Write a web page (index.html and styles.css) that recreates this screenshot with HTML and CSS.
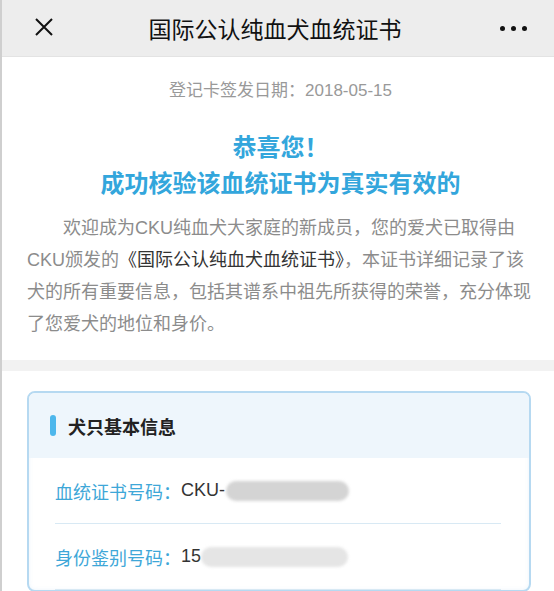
FILE: index.html
```html
<!DOCTYPE html>
<html lang="zh-CN">
<head>
<meta charset="utf-8">
<title>国际公认纯血犬血统证书</title>
<link rel="stylesheet" href="styles.css">
</head>
<body>
<div class="page">
  <header class="nav">
    <span class="nav-close">
      <svg width="20" height="20" viewBox="0 0 20 20"><path d="M2 2 L18 18 M18 2 L2 18" stroke="#111" stroke-width="2" fill="none"/></svg>
    </span>
    <h1 class="nav-title">国际公认纯血犬血统证书</h1>
    <span class="nav-more"><i></i><i></i><i></i></span>
  </header>

  <section class="intro">
    <p class="date">登记卡签发日期：2018-05-15</p>
    <h2 class="congrats">恭喜您！<br>成功核验该血统证书为真实有效的</h2>
    <p class="desc">欢迎成为CKU纯血犬大家庭的新成员，您的爱犬已取得由<br>CKU颁发的<span class="desc-strong">《国际公认纯血犬血统证书》</span>，本证书详细记录了该<br>犬的所有重要信息，包括其谱系中祖先所获得的荣誉，充分体现<br>了您爱犬的地位和身价。</p>
  </section>

  <div class="gap"></div>

  <section class="info">
    <div class="card">
      <div class="card-head"><span class="card-bar"></span>犬只基本信息</div>
      <div class="card-body">
        <div class="row"><span class="label">血统证书号码：</span><span class="value">CKU-</span><span class="mask mask-dark"></span></div>
        <div class="row"><span class="label">身份鉴别号码：</span><span class="value">15</span><span class="mask mask-light"></span></div>
      </div>
    </div>
  </section>
</div>
</body>
</html>
```

FILE: styles.css
```css
* { box-sizing: border-box; margin: 0; padding: 0; }
html, body { background: #fff; }
body {
  font-family: "Liberation Sans", "Noto Sans CJK SC", sans-serif;
  overflow: hidden;
}
.page {
  border-left: 2px solid #cfcfcf;
  min-height: 591px;
}
.nav {
  height: 57px;
  background: #ededed;
  border-bottom: 1px solid #e3e3e3;
  display: flex;
  align-items: center;
  padding: 0 27px 0 32px;
}
.nav-close { width: 20px; height: 20px; display: flex; margin-top: -2px; }
.nav-title {
  flex: 1;
  text-align: center;
  font-size: 23px;
  font-weight: 400;
  color: #111;
  font-family: "Noto Sans CJK SC", sans-serif;
  margin-right: 4px;
}
.nav-more { display: flex; gap: 6px; }
.nav-more i { width: 5px; height: 5px; border-radius: 50%; background: #111; display: block; }

.intro {
  padding: 22px 20px 20px 25px;
}
.date {
  text-align: center;
  font-size: 17px;
  line-height: 24px;
  color: #999;
}
.congrats {
  margin-top: 25px;
  text-align: center;
  font-size: 24px;
  line-height: 36px;
  font-weight: 700;
  color: #33a6dc;
  font-family: "Noto Sans CJK SC", sans-serif;
}
.desc {
  margin-top: 12px;
  font-size: 18px;
  line-height: 32px;
  color: #8c8c8c;
  text-indent: 2em;
  white-space: nowrap;
}
.desc-strong { color: #333; }

.gap { height: 11px; background: #f2f2f2; }

.info { padding: 20px 23px 0 25px; }
.card {
  border: 2px solid #b6d9f1;
  border-radius: 8px;
  overflow: hidden;
  box-shadow: inset 0 0 4px rgba(120, 180, 230, 0.15);
}
.card-head {
  height: 65px;
  background: #eef6fc;
  display: flex;
  align-items: center;
  padding-left: 21px;
  font-size: 18px;
  font-weight: 700;
  color: #222;
  font-family: "Noto Sans CJK SC", sans-serif;
}
.card-bar {
  width: 6px;
  height: 21px;
  border-radius: 3px;
  background: #4db7ec;
  margin-right: 12px;
}
.card-body { padding: 0 28px 0 26px; }
.row {
  height: 66px;
  display: flex;
  align-items: center;
  border-bottom: 1px solid #d8e9f4;
  font-size: 18px;
}
.label { color: #3ea7d8; }
.value { color: #333; }
.mask {
  display: inline-block;
  height: 20px;
  border-radius: 10px;
  filter: blur(1.5px);
}
.mask-dark { width: 123px; background: #d4d4d4; margin-left: 1px; }
.mask-light { width: 147px; background: #e5e5e5; margin-left: 0; }
```
